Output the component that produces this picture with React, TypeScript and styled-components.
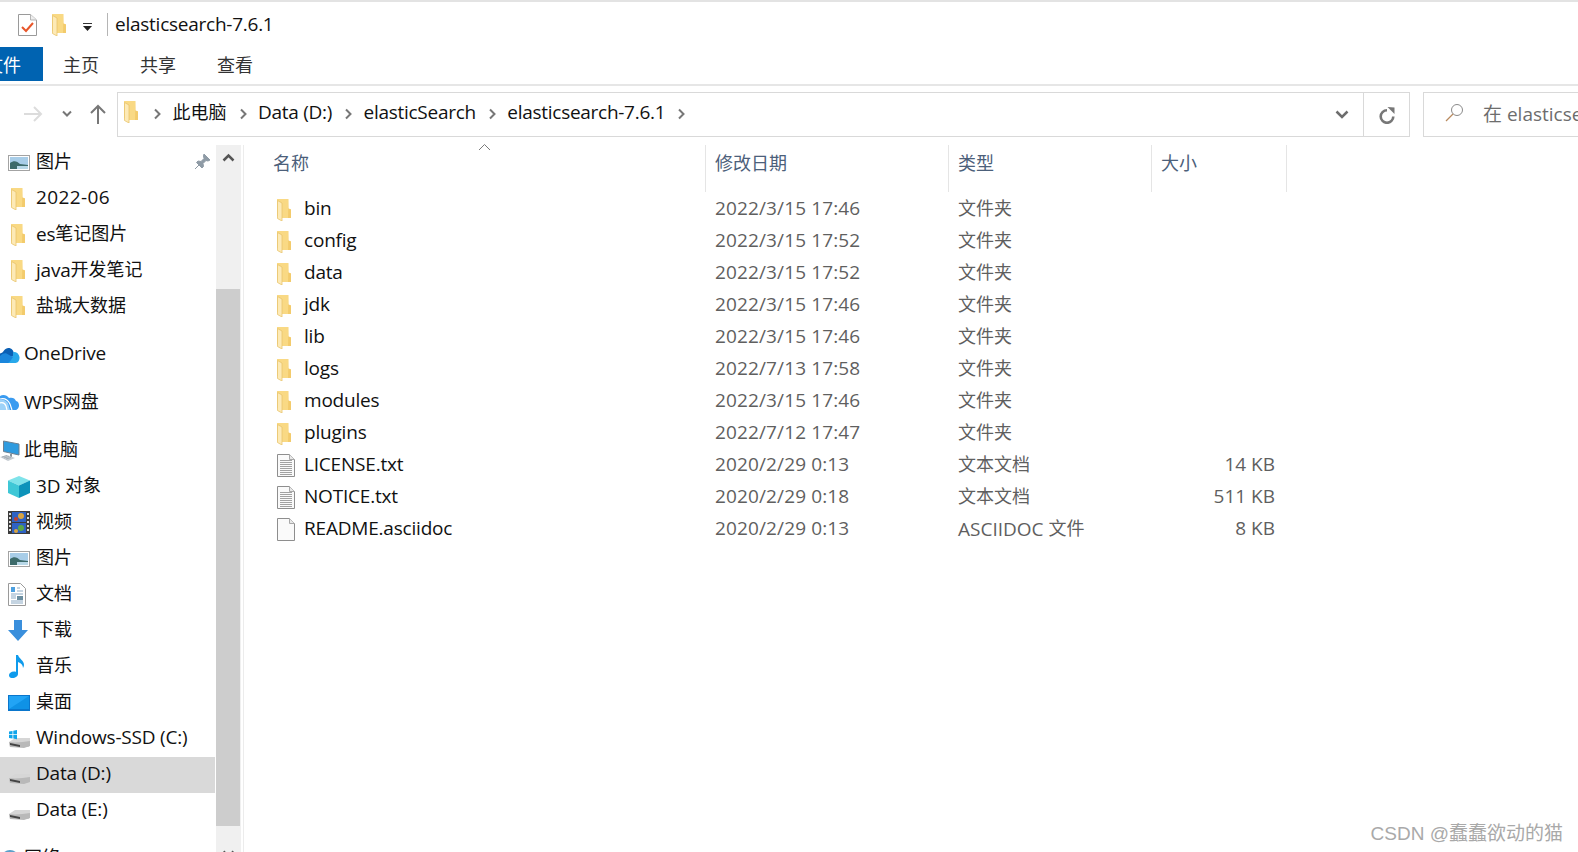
import React from "react";
import styled, { createGlobalStyle } from "styled-components";

const GlobalStyle = createGlobalStyle`
  html, body {
    margin: 0;
    padding: 0;
    background: #fff;
    overflow: hidden;
  }
  body {
    font-family: "Open Sans", "Noto Sans", "Noto Sans CJK SC", sans-serif;
    font-size: 19px;
    color: #111;
  }
`;

const Page = styled.div`
  position: relative;
  width: 1578px;
  height: 852px;
  overflow: hidden;
  display: flex;
  flex-direction: column;
  border-top: 2px solid #e3e3e3;
  box-sizing: border-box;
`;

const TitleBar = styled.div`
  height: 45px;
  display: flex;
  align-items: center;
  padding-left: 18px;
  flex-shrink: 0;
`;

const TitleText = styled.span`
  margin-left: 14px;
  padding-left: 7px;
  border-left: 1px solid #b5b5b5;
  line-height: 22px;
  font-size: 19px;
  letter-spacing: -0.25px;
  padding-bottom: 1px;
`;

const QuickDrop = styled.span`
  margin-left: 16px;
  display: flex;
  margin-top: 6px;
`;

const QuickFolder = styled.span`
  margin-left: 15px;
  display: flex;
`;

const Ribbon = styled.div`
  height: 37px;
  display: flex;
  flex-shrink: 0;
  border-bottom: 2px solid #e6e6e6;
`;

const FileTab = styled.div`
  width: 43px;
  height: 34px;
  background: #0063b1;
  color: #fff;
  display: flex;
  justify-content: flex-end;
  align-items: center;
  padding-right: 22px;
  box-sizing: border-box;
  white-space: nowrap;
  font-size: 18px;
`;

const RibbonTab = styled.div<{ $gap: number }>`
  height: 34px;
  line-height: 36px;
  margin-left: ${(p) => p.$gap}px;
  font-size: 18px;
  color: #333;
`;

const AddressRow = styled.div`
  height: 45px;
  margin-top: 6px;
  display: flex;
  align-items: stretch;
  flex-shrink: 0;
`;

const NavButtons = styled.div`
  width: 117px;
  display: flex;
  align-items: center;
  padding-left: 22px;
  padding-bottom: 2px;
  box-sizing: border-box;
  gap: 17px;
`;

const AddressBox = styled.div`
  width: 1247px;
  display: flex;
  align-items: center;
  border: 1px solid #d9d9d9;
  box-sizing: border-box;
  padding: 0 0 5px 6px;
`;

const Crumb = styled.span`
  font-size: 19px;
  letter-spacing: -0.28px;
`;

const CrumbArrow = styled.span<{ $first?: boolean }>`
  display: flex;
  margin: 3px 10.5px 0 ${(p) => (p.$first ? 15 : 12)}px;
`;

const AddressDrop = styled.span`
  margin: 5px 14px 0 auto;
  display: flex;
`;

const RefreshBox = styled.div`
  width: 46px;
  border: 1px solid #d9d9d9;
  border-left: none;
  box-sizing: border-box;
  display: flex;
  align-items: center;
  justify-content: center;
`;

const SearchBox = styled.div`
  margin-left: 13px;
  flex: 1;
  border: 1px solid #d9d9d9;
  border-right: none;
  display: flex;
  align-items: center;
  padding: 0 0 4px 21px;
  overflow: hidden;
  white-space: nowrap;
  color: #6d6d6d;
  font-size: 19px;
  gap: 19px;
  svg {
    flex-shrink: 0;
  }
`;

const Main = styled.div`
  flex: 1;
  display: flex;
  margin-top: 8px;
  min-height: 0;
`;

const Sidebar = styled.div`
  width: 215px;
  flex-shrink: 0;
`;

const NavRow = styled.div<{ $active?: boolean; $indent: number; $top?: number }>`
  height: 36px;
  margin-top: ${(p) => p.$top ?? 0}px;
  display: flex;
  align-items: center;
  box-sizing: border-box;
  padding: 0 0 4px ${(p) => p.$indent}px;
  background: ${(p) => (p.$active ? "#d9d9d9" : "transparent")};
  white-space: nowrap;
  position: relative;
  font-size: 19px;
  letter-spacing: -0.2px;
`;

const NavIcon = styled.span<{ $width: number }>`
  width: ${(p) => p.$width}px;
  flex-shrink: 0;
  display: flex;
  align-items: center;
  margin-top: 3px;
`;

const Cjk = styled.span`
  font-size: 18px;
  letter-spacing: 0;
  vertical-align: 1px;
`;

const Digits = styled.span`
  letter-spacing: 0.4px;
`;

const PinIcon = styled.span`
  position: absolute;
  right: 4px;
  top: 8px;
  display: flex;
`;

const ScrollTrack = styled.div`
  width: 25px;
  margin-left: 1px;
  flex-shrink: 0;
  background: #f0f0f0;
  display: flex;
  flex-direction: column;
  overflow: hidden;
`;

const ScrollUp = styled.div`
  height: 144px;
  flex-shrink: 0;
  display: flex;
  justify-content: center;
  padding-top: 8px;
  box-sizing: border-box;
`;

const ScrollThumb = styled.div`
  height: 537px;
  width: 24px;
  flex-shrink: 0;
  background: #cdcdcd;
`;

const ScrollDown = styled.div`
  padding-top: 24px;
  flex-shrink: 0;
  display: flex;
  justify-content: center;
`;

const SplitLine = styled.div`
  width: 1px;
  margin-left: 2px;
  background: #ececec;
  flex-shrink: 0;
`;

const Content = styled.div`
  flex: 1;
  position: relative;
  min-width: 0;
`;

const HeaderRow = styled.div`
  height: 47px;
  display: flex;
  color: #4c607a;
  font-size: 18px;
`;

const HeaderCell = styled.div<{ $width: number; $line?: boolean }>`
  width: ${(p) => p.$width}px;
  box-sizing: border-box;
  padding-left: ${(p) => (p.$line ? 9 : 29)}px;
  line-height: 36px;
  border-right: 1px solid #e5e5e5;
`;

const SortCaret = styled.span`
  position: absolute;
  left: 234px;
  top: -2px;
  display: flex;
`;

const Row = styled.div`
  height: 32px;
  display: flex;
  align-items: center;
  font-size: 19px;
`;

const NameCell = styled.div`
  width: 462px;
  display: flex;
  align-items: center;
  padding-left: 33px;
  box-sizing: border-box;
  letter-spacing: -0.2px;
`;

const FileIcon = styled.span`
  width: 27px;
  display: flex;
  flex-shrink: 0;
  margin-top: 3px;
`;

const DateCell = styled.div`
  width: 243px;
  padding-left: 9px;
  box-sizing: border-box;
  color: #5f5f5f;
  letter-spacing: 0.13px;
`;

const TypeCell = styled.div`
  width: 203px;
  padding-left: 9px;
  box-sizing: border-box;
  color: #5f5f5f;
`;

const SizeCell = styled.div`
  width: 135px;
  text-align: right;
  padding-right: 12px;
  box-sizing: border-box;
  color: #5f5f5f;
`;

const Watermark = styled.div`
  position: absolute;
  right: 15px;
  top: 819px;
  color: #a9a9a9;
  font-family: "Liberation Sans", "Noto Sans CJK SC", sans-serif;
  font-size: 19px;
  line-height: 26px;
  white-space: nowrap;
`;

// CJK runs sit a pixel smaller than the latin text, as in the explorer font
const Mixed = ({ text }: { text: string }) => (
  <span>
    {text.split(/([\u4e00-\u9fff]+|\d+-\d+)/).map((part, i) =>
      /[\u4e00-\u9fff]/.test(part) ? (
        <Cjk key={i}>{part}</Cjk>
      ) : /\d+-\d+/.test(part) ? (
        <Digits key={i}>{part}</Digits>
      ) : (
        part
      )
    )}
  </span>
);

const Folder = () => (
  <svg width="14" height="22" viewBox="0 0 14 22">
    <path d="M0 0h11.500v9.500L14 10.500V19H5L0 17z" fill="#f9d984" />
    <path d="M11.500 0v9.500L14 10.500V19h-3z" fill="#f3cb6c" />
    <path d="M.5 1.500L5 4v18L.5 19.500z" fill="#fdeab6" stroke="#e9c46c" strokeWidth=".8" />
  </svg>
);

const Arrow = () => (
  <svg width="9" height="12" viewBox="0 0 9 12">
    <path d="M2 1.500l4.500 4.500L2 10.500" fill="none" stroke="#777" strokeWidth="2" />
  </svg>
);

const TextFile = ({ lines }: { lines: boolean }) => (
  <svg width="18" height="23" viewBox="0 0 18 23">
    <path d="M.5.500h12l5 5v17H.5z" fill="#fafafa" stroke="#8e8e8e" />
    <path d="M12.500.500v5h5" fill="#e8e8e8" stroke="#a8a8a8" />
    {lines &&
      [6, 8, 10, 12, 14, 16, 18, 20].map((y) => (
        <path key={y} d={`M3 ${y}.5h12`} stroke="#a2a2a2" strokeWidth="1" />
      ))}
  </svg>
);

const PictureIcon = () => (
  <svg width="22" height="16" viewBox="0 0 22 16">
    <rect x=".5" y=".5" width="21" height="15" fill="#fff" stroke="#a3a3a3" />
    <rect x="2" y="2" width="18" height="12" fill="#a8cde8" />
    <path d="M2 8c4-3 7-2 10 1l8 1v4H2z" fill="#3d6b6b" />
    <path d="M9 11h11v3H9z" fill="#b8d8e8" />
  </svg>
);

const Drive = ({ win }: { win?: boolean }) => (
  <svg width="23" height="20" viewBox="0 0 23 20">
    <path d="M1 13l6-4h15v4l-1 5H2z" fill="#d6d6d6" />
    <path d="M1 13c7 1 14 0 21-1v5l-6 2-14-1z" fill="#b9b9b9" />
    <path d="M2 14l10 2v2l-10-2z" fill="#444" />
    {win && (
      <path d="M1 2.500l3.500-.6v3.400H1zM5.300 1.800L9 1v4.300H5.300zM1 6h3.500v3.400L1 8.900zM5.300 6H9v4.200l-3.700-.6z" fill="#10a5ea" />
    )}
  </svg>
);

const OneDriveIcon = () => (
  <svg width="20" height="16" viewBox="0 0 20 16">
    <path d="M0 9V6.500C2 6 3 5 4 3.500 6 .5 10 0 12.500 3c.5.500.7 1 .9 1.800L16 8l-7 2z" fill="#0a5fb4" />
    <path d="M0 9c2-2 4-3 6.500-2.500L11 9l6 .5L14 16H0z" fill="#1a86dc" />
    <path d="M13 5c3-.5 6 1.500 6.500 5 .3 3-1.500 6-4 6H8c2-1 3-3 5-6 0-2 0-3 0-5z" fill="#28a8ea" />
  </svg>
);

const WpsIcon = () => (
  <svg width="20" height="17" viewBox="0 0 20 17">
    <path d="M0 2c3-2 7-1 9 2 3-1 6 0 7 3 2 0 3 2.500 3 4.500S17.500 16 15.500 16H0z" fill="#3a9bf0" />
    <path d="M0 16V6c3-1 6 0 8 3l2 7z" fill="#9dd2f8" />
    <path d="M0 5c4-1 8 1 10 5l2 6M0 9c3-1 5 .5 6 3l1 4" fill="none" stroke="#fff" strokeWidth="1.200" />
  </svg>
);

const ComputerIcon = () => (
  <svg width="20" height="22" viewBox="0 0 20 22">
    <path d="M3.500 1L19 4v11L3.500 11.500z" fill="#2f9bdf" stroke="#6d8091" />
    <path d="M11 14v3" stroke="#8a949c" strokeWidth="2" />
    <path d="M0 17l7-2 8 3-7 3z" fill="#c5ccd2" />
    <path d="M2 17l5-1.500M4 18l5-1.500M6 19l5-1.500" stroke="#97a0a7" strokeWidth=".7" />
  </svg>
);

const CubeIcon = () => (
  <svg width="22" height="22" viewBox="0 0 22 22">
    <path d="M11 0l11 4.500-11 5L0 4.500z" fill="#7fe3ea" />
    <path d="M0 4.500l11 5V22L0 17z" fill="#3ec7d6" />
    <path d="M22 4.500l-11 5V22l11-5z" fill="#0d93ba" />
  </svg>
);

const VideoIcon = () => (
  <svg width="22" height="23" viewBox="0 0 22 23">
    <rect width="22" height="23" fill="#3c3c3c" />
    <path d="M4 1h14v10H4z" fill="#2e62c4" />
    <path d="M4 12h14v10H4z" fill="#2e62c4" />
    <circle cx="13" cy="5" r="3" fill="#d9a441" />
    <circle cx="8" cy="8" r="2" fill="#c2402e" />
    <circle cx="13" cy="17" r="3" fill="#5aa648" />
    <circle cx="8" cy="20" r="2" fill="#d9a441" />
    {[2, 6, 10, 14, 18].map((y) => (
      <React.Fragment key={y}>
        <rect x="1" y={y} width="2" height="2" fill="#ddd" />
        <rect x="19" y={y} width="2" height="2" fill="#ddd" />
      </React.Fragment>
    ))}
  </svg>
);

const DocIcon = () => (
  <svg width="18" height="23" viewBox="0 0 18 23">
    <path d="M.5.500h12l5 5v17H.5z" fill="#fff" stroke="#9a9a9a" />
    <path d="M3 4h4v5H3z" fill="#4da0e0" />
    <path d="M9 5h3M9 8h6M3 11h12M3 18h12M3 20h12" stroke="#8aa9c4" />
    <path d="M9 13h6v4H9z" fill="#6b8ea0" />
    <path d="M3 13h5M3 15h5" stroke="#8aa9c4" />
  </svg>
);

const DownloadIcon = () => (
  <svg width="20" height="21" viewBox="0 0 20 21">
    <path d="M6 0h8v10h6l-10 11L0 10h6z" fill="#3a8fdc" />
  </svg>
);

const MusicIcon = () => (
  <svg width="18" height="23" viewBox="0 0 18 23">
    <path d="M8 0h2c1 4 6 5 6 10 0 1-.5 2-1 3 0-3-2-5-5-6v12c0 2-2.500 4-5.500 4S1 21.500 1 20s2-3.500 5-3.500c1 0 1.500.2 2 .4z" fill="#0f9bec" />
  </svg>
);

const DesktopIcon = () => (
  <svg width="22" height="16" viewBox="0 0 22 16">
    <rect width="22" height="16" fill="#0a76cc" />
    <path d="M1 1h20v13H1z" fill="#22a4f5" />
    <path d="M1 14L21 1v13z" fill="#0f92e6" />
  </svg>
);

const GlobeIcon = () => (
  <svg width="20" height="20" viewBox="0 0 20 20">
    <circle cx="10" cy="10" r="9" fill="#5a9fc9" />
    <path d="M5 5l6-2 1 5-5 3z" fill="#6ab04c" />
  </svg>
);

const Pin = () => (
  <svg width="17" height="17" viewBox="0 0 17 17">
    <path d="M10 1l6 6-2 1-2-.5-3 3 .5 3-1.500 1.500L2.500 9.500 4 8l3 .5 3-3L9.500 3zM5 12l-4 4" fill="#8f9ba6" stroke="#8f9ba6" />
  </svg>
);

const quickAccess = ["2022-06", "es笔记图片", "java开发笔记", "盐城大数据"];

const thisPc: { label: string; icon: React.ReactNode; active?: boolean }[] = [
  { label: "3D 对象", icon: <CubeIcon /> },
  { label: "视频", icon: <VideoIcon /> },
  { label: "图片", icon: <PictureIcon /> },
  { label: "文档", icon: <DocIcon /> },
  { label: "下载", icon: <DownloadIcon /> },
  { label: "音乐", icon: <MusicIcon /> },
  { label: "桌面", icon: <DesktopIcon /> },
  { label: "Windows-SSD (C:)", icon: <Drive win /> },
  { label: "Data (D:)", icon: <Drive />, active: true },
  { label: "Data (E:)", icon: <Drive /> },
];

type FileKind = "folder" | "text" | "blank";

const files: { name: string; date: string; type: string; size?: string; kind: FileKind }[] = [
  { name: "bin", date: "2022/3/15 17:46", type: "文件夹", kind: "folder" },
  { name: "config", date: "2022/3/15 17:52", type: "文件夹", kind: "folder" },
  { name: "data", date: "2022/3/15 17:52", type: "文件夹", kind: "folder" },
  { name: "jdk", date: "2022/3/15 17:46", type: "文件夹", kind: "folder" },
  { name: "lib", date: "2022/3/15 17:46", type: "文件夹", kind: "folder" },
  { name: "logs", date: "2022/7/13 17:58", type: "文件夹", kind: "folder" },
  { name: "modules", date: "2022/3/15 17:46", type: "文件夹", kind: "folder" },
  { name: "plugins", date: "2022/7/12 17:47", type: "文件夹", kind: "folder" },
  { name: "LICENSE.txt", date: "2020/2/29 0:13", type: "文本文档", size: "14 KB", kind: "text" },
  { name: "NOTICE.txt", date: "2020/2/29 0:18", type: "文本文档", size: "511 KB", kind: "text" },
  { name: "README.asciidoc", date: "2020/2/29 0:13", type: "ASCIIDOC 文件", size: "8 KB", kind: "blank" },
];

const crumbs = ["此电脑", "Data (D:)", "elasticSearch", "elasticsearch-7.6.1"];

export default function App() {
  return (
    <Page>
      <GlobalStyle />
      <TitleBar>
        <svg width="19" height="22" viewBox="0 0 19 22">
          <path d="M.5.500h12l6 5.500v15.500H.5z" fill="#fff" stroke="#9a9a9a" />
          <path d="M12.500.500V6h6" fill="#eee" stroke="#b5b5b5" />
          <path d="M4 13l4 4 7-8" fill="none" stroke="#e8562a" strokeWidth="2" />
        </svg>
        <QuickFolder>
          <Folder />
        </QuickFolder>
        <QuickDrop>
          <svg width="11" height="9" viewBox="0 0 11 9">
            <path d="M1 0h9v1H1z" fill="#333" />
            <path d="M1 3h9L5.500 8z" fill="#222" />
          </svg>
        </QuickDrop>
        <TitleText>elasticsearch-7.6.1</TitleText>
      </TitleBar>

      <Ribbon>
        <FileTab>文件</FileTab>
        <RibbonTab $gap={20}>主页</RibbonTab>
        <RibbonTab $gap={41}>共享</RibbonTab>
        <RibbonTab $gap={41}>查看</RibbonTab>
      </Ribbon>

      <AddressRow>
        <NavButtons>
          <svg width="22" height="18" viewBox="0 0 22 18">
            <path d="M2 9h17M12 2l7 7-7 7" fill="none" stroke="#dcdcdc" strokeWidth="2" />
          </svg>
          <svg width="12" height="8" viewBox="0 0 12 8">
            <path d="M2 1.500l4 4 4-4" fill="none" stroke="#777" strokeWidth="2" />
          </svg>
          <svg width="16" height="20" viewBox="0 0 16 20">
            <path d="M8 20V2M1 9l7-7 7 7" fill="none" stroke="#777" strokeWidth="2" />
          </svg>
        </NavButtons>
        <AddressBox>
          <Folder />
          <CrumbArrow $first>
            <Arrow />
          </CrumbArrow>
          {crumbs.map((c) => (
            <React.Fragment key={c}>
              <Crumb>
                <Mixed text={c} />
              </Crumb>
              <CrumbArrow>
                <Arrow />
              </CrumbArrow>
            </React.Fragment>
          ))}
          <AddressDrop>
            <svg width="14" height="9" viewBox="0 0 14 9">
              <path d="M1.500 1.500L7 7l5.500-5.500" fill="none" stroke="#6d6d6d" strokeWidth="2.500" />
            </svg>
          </AddressDrop>
        </AddressBox>
        <RefreshBox>
          <svg width="18" height="18" viewBox="0 0 18 18">
            <path d="M9 4.200A6.300 6.300 0 1 0 15.300 10.500" fill="none" stroke="#777" strokeWidth="2.600" />
            <path d="M9.500 1l7 .5V8z" fill="#777" />
          </svg>
        </RefreshBox>
        <SearchBox>
          <svg width="19" height="19" viewBox="0 0 19 19">
            <circle cx="12" cy="7" r="5.500" fill="none" stroke="#8a8a8a" />
            <path d="M8 11L1 18" stroke="#b98a5e" strokeWidth="1.300" />
          </svg>
          <span>在 elasticsearch-7.6.1 中搜索</span>
        </SearchBox>
      </AddressRow>

      <Main>
        <Sidebar>
          <NavRow $indent={8}>
            <NavIcon $width={28}>
              <PictureIcon />
            </NavIcon>
            <Mixed text="图片" />
            <PinIcon>
              <Pin />
            </PinIcon>
          </NavRow>
          {quickAccess.map((q) => (
            <NavRow key={q} $indent={11}>
              <NavIcon $width={25}>
                <Folder />
              </NavIcon>
              <Mixed text={q} />
            </NavRow>
          ))}
          <NavRow $indent={0} $top={12}>
            <NavIcon $width={24}>
              <OneDriveIcon />
            </NavIcon>
            OneDrive
          </NavRow>
          <NavRow $indent={0} $top={12}>
            <NavIcon $width={24}>
              <WpsIcon />
            </NavIcon>
            <Mixed text="WPS网盘" />
          </NavRow>
          <NavRow $indent={0} $top={12}>
            <NavIcon $width={24}>
              <ComputerIcon />
            </NavIcon>
            <Mixed text="此电脑" />
          </NavRow>
          {thisPc.map((item) => (
            <NavRow key={item.label} $indent={8} $active={item.active}>
              <NavIcon $width={28}>{item.icon}</NavIcon>
              <Mixed text={item.label} />
            </NavRow>
          ))}
          <NavRow $indent={0} $top={12}>
            <NavIcon $width={24}>
              <GlobeIcon />
            </NavIcon>
            <Mixed text="网络" />
          </NavRow>
        </Sidebar>

        <ScrollTrack>
          <ScrollUp>
            <svg width="13" height="9" viewBox="0 0 13 9">
              <path d="M1.500 7.500l5-5 5 5" fill="none" stroke="#555" strokeWidth="2.500" />
            </svg>
          </ScrollUp>
          <ScrollThumb />
          <ScrollDown>
            <svg width="13" height="9" viewBox="0 0 13 9">
              <path d="M1.500 1.500l5 5 5-5" fill="none" stroke="#555" strokeWidth="2.500" />
            </svg>
          </ScrollDown>
        </ScrollTrack>
        <SplitLine />

        <Content>
          <SortCaret>
            <svg width="13" height="8" viewBox="0 0 13 8">
              <path d="M1 7l5.500-5.500L12 7" fill="none" stroke="#7a7a7a" />
            </svg>
          </SortCaret>
          <HeaderRow>
            <HeaderCell $width={462}>名称</HeaderCell>
            <HeaderCell $width={243} $line>
              修改日期
            </HeaderCell>
            <HeaderCell $width={203} $line>
              类型
            </HeaderCell>
            <HeaderCell $width={135} $line>
              大小
            </HeaderCell>
          </HeaderRow>
          {files.map((f) => (
            <Row key={f.name}>
              <NameCell>
                <FileIcon>
                  {f.kind === "folder" ? <Folder /> : <TextFile lines={f.kind === "text"} />}
                </FileIcon>
                {f.name}
              </NameCell>
              <DateCell>{f.date}</DateCell>
              <TypeCell>
                <Mixed text={f.type} />
              </TypeCell>
              <SizeCell>{f.size}</SizeCell>
            </Row>
          ))}
        </Content>
      </Main>
      <Watermark>CSDN @蠢蠢欲动的猫</Watermark>
    </Page>
  );
}
